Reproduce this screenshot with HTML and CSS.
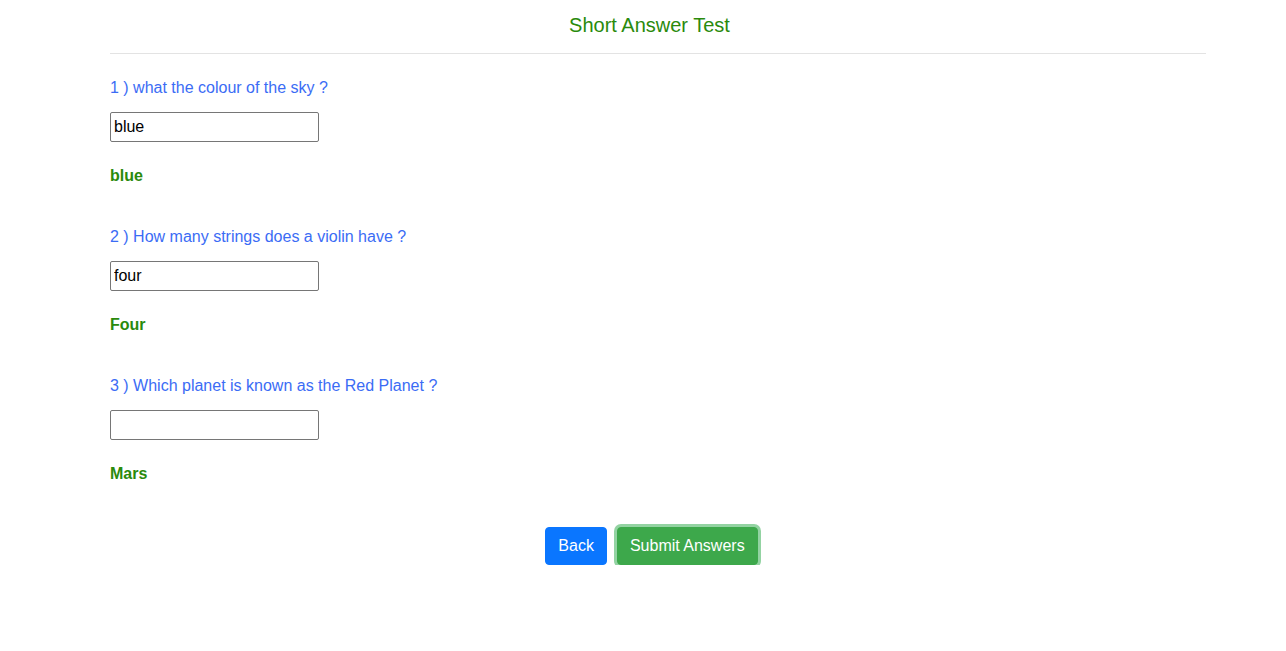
FILE: index.html
```html
<!DOCTYPE html>
<html>
<head>
<meta charset="utf-8">
<title>Short Answer Test</title>
<link rel="stylesheet" href="styles.css">
</head>
<body>
<div class="container">
  <h1 class="title">Short Answer Test</h1>
  <hr class="divider">
  <div class="question">
    <p class="q-text">1 ) what the colour of the sky ?</p>
    <input class="answer-input" type="text" value="blue">
    <p class="q-answer">blue</p>
  </div>
  <div class="question">
    <p class="q-text">2 ) How many strings does a violin have ?</p>
    <input class="answer-input" type="text" value="four">
    <p class="q-answer">Four</p>
  </div>
  <div class="question">
    <p class="q-text">3 ) Which planet is known as the Red Planet ?</p>
    <input class="answer-input" type="text" value="">
    <p class="q-answer">Mars</p>
  </div>
  <div class="actions">
    <button class="btn btn-back">Back</button>
    <button class="btn btn-submit">Submit Answers</button>
  </div>
</div>
</body>
</html>
```

FILE: styles.css
```css
* { box-sizing: border-box; }
html, body { margin: 0; padding: 0; background: #fff; }
body {
  font-family: "Liberation Sans", Arial, sans-serif;
  font-size: 16px;
  color: #212529;
}
.container {
  width: 1096px;
  margin: 0 0 0 110px;
}
.title {
  margin: 0;
  padding-top: 13px;
  padding-right: 17px;
  font-size: 20px;
  font-weight: normal;
  line-height: 24px;
  text-align: center;
  color: #2a8a0c;
}
.divider {
  margin: 16px 0 0 0;
  border: 0;
  border-top: 1px solid #e3e3e3;
  height: 0;
}
.question {
  display: flex;
  flex-direction: column;
  align-items: flex-start;
  margin-top: 24px;
}
.question + .question { margin-top: 41px; }
.q-text {
  margin: 0;
  line-height: 20px;
  color: #3b6cf5;
}
.answer-input {
  margin-top: 14px;
  width: 209px;
  height: 30px;
  padding: 1px 3px;
  border: 1px solid #767676;
  border-radius: 2px;
  font-family: "Liberation Sans", Arial, sans-serif;
  font-size: 16px;
  color: #000;
  background: #fff;
}
.q-answer {
  margin: 24px 0 0 0;
  line-height: 20px;
  font-weight: bold;
  color: #2a8a0c;
}
.actions {
  display: flex;
  justify-content: center;
  gap: 10px;
  margin-top: 43px;
  padding-right: 13px;
}
.btn {
  font-family: "Liberation Sans", Arial, sans-serif;
  font-size: 16px;
  line-height: 24px;
  padding: 6px 12px;
  border: 1px solid transparent;
  border-radius: 4px;
  color: #fff;
  cursor: pointer;
}
.btn-back {
  background: #0a76ff;
  border-color: #0a76ff;
}
.btn-submit {
  background: #3da84b;
  border-color: #3da84b;
  box-shadow: 0 0 0 3px rgba(40, 167, 69, 0.5);
}
```
